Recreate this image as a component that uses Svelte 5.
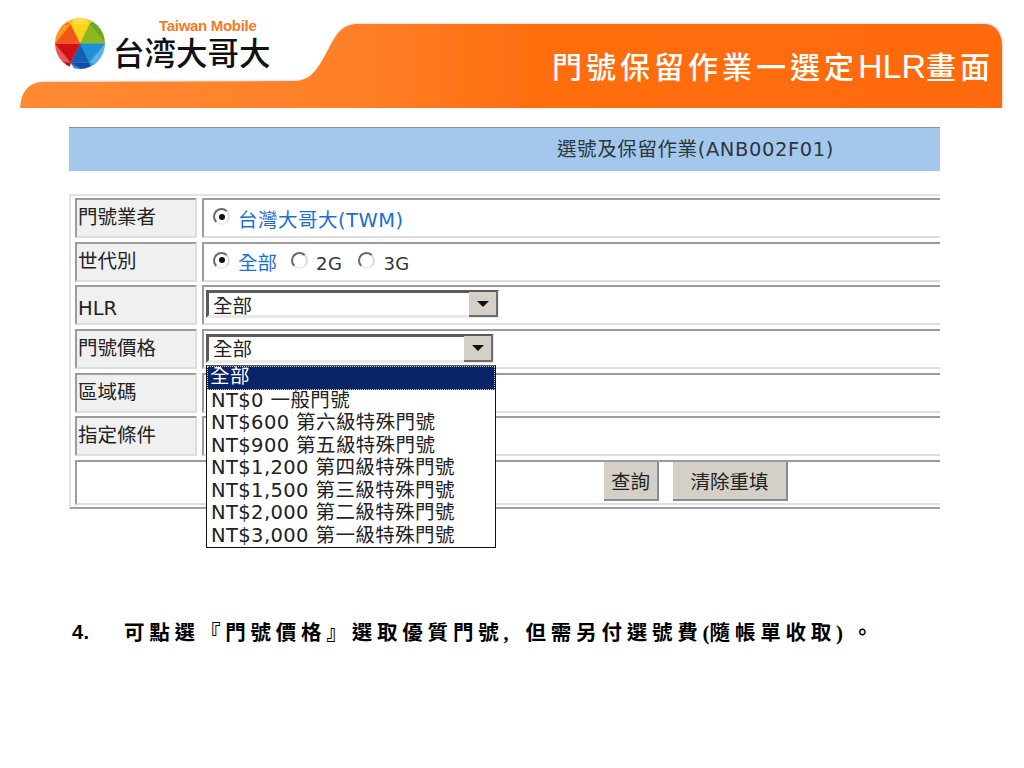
<script>
  const options = ['NT$0 一般門號','NT$600 第六級特殊門號','NT$900 第五級特殊門號','NT$1,200 第四級特殊門號','NT$1,500 第三級特殊門號','NT$2,000 第二級特殊門號','NT$3,000 第一級特殊門號'];
  const facets = [
    ['#ffb81c','24,-8 -4,-8 15,6 33,6'],['#ffe040','15,6 24,-8 33,6'],
    ['#f4c81e','33,6 24,-8 44,-4'],['#6aa828','33,6 44,-4 48,24'],['#a4c93c','44,-4 56,24 48,24'],
    ['#58b4e6','48,24 56,24 56,44 33,42'],['#2f9fdc','33,42 56,44 36,54'],['#2d86cc','15,42 36,54 24,56'],['#0e4ea8','33,42 36,54 15,42'],
    ['#e8585a','15,42 -8,40 -8,24 0,24'],['#b80f14','15,42 12,54 -8,40'],['#ff9a1c','0,24 -8,24 -8,10 15,6'],['#ff7a12','15,6 -8,10 -4,-8'],
    ['#ffd21a','24,24 15,6 33,6'],['#8cb81e','24,24 33,6 48,24'],['#1f8fd6','24,24 48,24 33,42'],
    ['#1060b8','24,24 33,42 15,42'],['#d40f12','24,24 15,42 0,24'],['#f0571a','24,24 0,24 15,6']
  ];
</script>

<div class="slide">
  <header class="head">
    <svg class="wave" viewBox="0 0 1024 108" width="1024" height="108" aria-hidden="true">
      <defs>
        <linearGradient id="wg" x1="0" x2="1" y1="0" y2="0">
          <stop offset="0" stop-color="#ff8a33"/>
          <stop offset=".35" stop-color="#ff7f26"/>
          <stop offset=".52" stop-color="#ff6e10"/>
          <stop offset="1" stop-color="#ff6a0a"/>
        </linearGradient>
        <filter id="ws" x="-2%" y="-10%" width="104%" height="120%">
          <feDropShadow dx="1" dy="-0.5" stdDeviation="0.8" flood-color="#888" flood-opacity=".4"/>
        </filter>
      </defs>
      <path d="M20 108.500 C21 92 28 83 42 82 L296 81 C312 80 318 68 328 50 C336 34 342 24 358 24 L984 24 C996 24 1002 34 1002 46 L1002 108.500 Z" fill="url(#wg)" filter="url(#ws)"/>
    </svg>
    <div class="logo">
      <svg class="ball" viewBox="0 0 48 48" width="50" height="51" preserveAspectRatio="none" aria-hidden="true">
        <defs><clipPath id="bc"><circle cx="24" cy="24" r="24"/></clipPath></defs>
        <g clip-path="url(#bc)">
          {#each facets as f}<polygon points={f[1]} fill={f[0]} stroke={f[0]} stroke-width=".3"/>{/each}
        </g>
      </svg>
      <div class="brand">
        <span class="en">Taiwan Mobile</span>
        <span class="zh">台湾大哥大</span>
      </div>
    </div>
    <h1 class="title">門號保留作業一選定<span class="hlr">HLR</span>畫面</h1>
  </header>

  <main class="main">
    <div class="bar">選號及保留作業(ANB002F01)</div>
    <div class="table">
      <div class="cell label">門號業者</div>
      <div class="cell value"><span class="radio on"></span><span class="blue wide">台灣大哥大(TWM)</span></div>

      <div class="cell label">世代別</div>
      <div class="cell value">
        <span class="radio on"></span><span class="blue">全部</span>
        <span class="radio r2"></span><span class="plain">2G</span>
        <span class="radio r3"></span><span class="plain">3G</span>
      </div>

      <div class="cell label hl">HLR</div>
      <div class="cell value sel"><div class="select hlrsel"><span>全部</span><i class="arrow"></i></div></div>

      <div class="cell label">門號價格</div>
      <div class="cell value sel">
        <div class="select price"><span>全部</span><i class="arrow"></i>
          <div class="list">
            <div class="opt active">全部</div>
            {#each options as o}<div class="opt">{o}</div>{/each}
          </div>
        </div>
      </div>

      <div class="cell label">區域碼</div>
      <div class="cell value"></div>

      <div class="cell label">指定條件</div>
      <div class="cell value"></div>

      <div class="cell actions">
        <button class="btn q">查詢</button>
        <button class="btn r">清除重填</button>
      </div>
    </div>

    <p class="note"><span class="num">4.</span><span class="txt">可點選『門號價格』選取優質門號<b class="c">,</b>但需另付選號費<b class="p">(</b>隨帳單收取<b class="p e">)</b>。</span></p>
  </main>
</div>

<style>
  :global(body) { margin: 0; background: #fff; }
  .slide {
    width: 1024px; height: 768px; overflow: hidden; background: #fff;
    font-family: "DejaVu Sans", "Noto Sans CJK TC", sans-serif; color: #222;
  }
  .head { position: relative; height: 108px; }
  .wave { position: absolute; left: 0; top: 0; }
  .logo { position: relative; display: flex; align-items: flex-start; padding: 18px 0 0 55px; }
  .ball { display: block; flex: none; }
  .brand { display: flex; flex-direction: column; margin-left: 8px; }
  .en {
    font: 700 15px/15px "Liberation Sans", sans-serif; color: #f47a25;
    margin: 0 0 3px 46px; letter-spacing: -.3px;
  }
  .zh {
    font: 500 31.500px/30px "Noto Sans CJK TC", sans-serif; color: #111;
  }
  .title {
    position: absolute; right: 30px; top: 45px; margin: 0; white-space: nowrap;
    font: 500 30px/40px "Noto Sans CJK TC", sans-serif; letter-spacing: 4px; color: #fff;
  }
  .hlr { font: 400 34px/40px "Liberation Sans", sans-serif; letter-spacing: 0; }

  .main { padding: 19px 0 0 69px; width: 871px; }
  .bar {
    box-sizing: border-box; height: 44px; background: #a4c8ec; border-top: 1px solid #7f93a8;
    padding-left: 488px; font-size: 19.500px; letter-spacing: .6px; line-height: 43px; color: #2b3640; white-space: nowrap;
  }
  .table {
    box-sizing: border-box; margin-top: 23px; height: 315px; padding: 2px 0 2px 4px;
    border-top: 2px solid #e2e2e2; border-left: 2px solid #e2e2e2; border-bottom: 2px solid #a0a0a0;
    display: grid; grid-template-columns: 122px 1fr; column-gap: 5px;
    grid-template-rows: repeat(6, 40px) 45px; row-gap: 3.67px;
  }
  .cell {
    box-sizing: border-box; display: flex; align-items: center; min-width: 0;
    border-top: 2px solid #9c9c9c; border-left: 2px solid #9c9c9c; border-bottom: 2px solid #dedede;
    font-size: 19.500px; line-height: 24px; white-space: nowrap;
  }
  .label { background: #f0f0f0; border-right: 2px solid #dedede; padding-left: 1px; color: #222; }
  .hl { padding-top: 7px; }
  .value { background: #fff; padding-left: 9px; padding-top: 5px; }
  .sel { padding-left: 2px; align-items: flex-start; padding-top: 3px; }
  .actions { grid-column: 1 / -1; padding-left: 527px; gap: 14px; background: #fff; align-items: flex-start; }

  .radio {
    flex: none; box-sizing: border-box; width: 17px; height: 17px; border-radius: 50%; margin-top: -8px;
    background: #fff; border: 2px solid; border-color: #6a6a6a #dcdcdc #ececec #6a6a6a;
    display: flex; align-items: center; justify-content: center;
  }
  .radio.on::after { content: ""; width: 6px; height: 6px; border-radius: 50%; background: #111; }
  .r2 { margin-left: 14px; }
  .r3 { margin-left: 16px; }
  .blue { color: #1c6ed2; margin-left: 8px; }
  .wide { letter-spacing: .5px; }
  .plain { color: #333; margin-left: 8px; font-size: 18px; letter-spacing: .5px; }

  .select {
    position: relative; box-sizing: border-box; height: 28px; background: #fff;
    border: 3px solid; border-color: #5a5a5a #e8e8e8 #e8e8e8 #5a5a5a; display: flex; align-items: center;
    padding-left: 4px; padding-top: 3px; font-size: 19.500px; color: #222;
  }
  .hlrsel { width: 293px; padding-top: 5px; }
  .price { width: 288px; height: 29px; }
  .arrow {
    position: absolute; right: -2px; top: -1px; bottom: -2px; width: 29px; background: #d4d0c8;
    border-right: 2px solid #6c6c6c; border-bottom: 2px solid #6c6c6c; box-sizing: border-box;
    display: flex; align-items: center; justify-content: center;
  }
  .arrow::after {
    content: ""; width: 0; height: 0; border-left: 6px solid transparent; border-right: 6px solid transparent;
    border-top: 6px solid #111;
  }
  .list {
    position: absolute; left: -3px; top: 28px; width: 290px; height: 183px; box-sizing: border-box; z-index: 2;
    background: #fff; border: 1px solid #111; border-top-color: #555;
    font-size: 19.500px; color: #222; letter-spacing: .4px;
  }
  .opt { height: 22.500px; line-height: 22.500px; padding-left: 4px; white-space: nowrap; }
  .active { height: 24px; background: #0a246a; color: #fff; outline: 1px dotted #c8c8c8; outline-offset: -1px; padding-left: 3px; }

  .btn {
    box-sizing: border-box; height: 39px; padding: 0; background: #d4d0c8; color: #222;
    border: 0; border-right: 2px solid #8a8a8a; border-bottom: 2px solid #8a8a8a;
    font-family: inherit; font-size: 19.500px;
  }
  .q { width: 55px; }
  .r { width: 115px; }

  .note {
    margin: 108px 0 0 3px; display: flex; align-items: center; height: 30px; white-space: nowrap; width: 900px;
    color: #000;
  }
  .num { font: 700 20px/30px "Liberation Sans", sans-serif; width: 52px; letter-spacing: .5px; flex: none; }
  .txt { font: 700 20.500px/30px "Noto Sans CJK TC", sans-serif; letter-spacing: 4.800px; }
  .c { font: 700 20px/30px "Liberation Serif", serif; letter-spacing: 17px; }
  .p { font: 700 21px/30px "Liberation Serif", serif; letter-spacing: 0; }
  .e { letter-spacing: 9px; }
</style>
